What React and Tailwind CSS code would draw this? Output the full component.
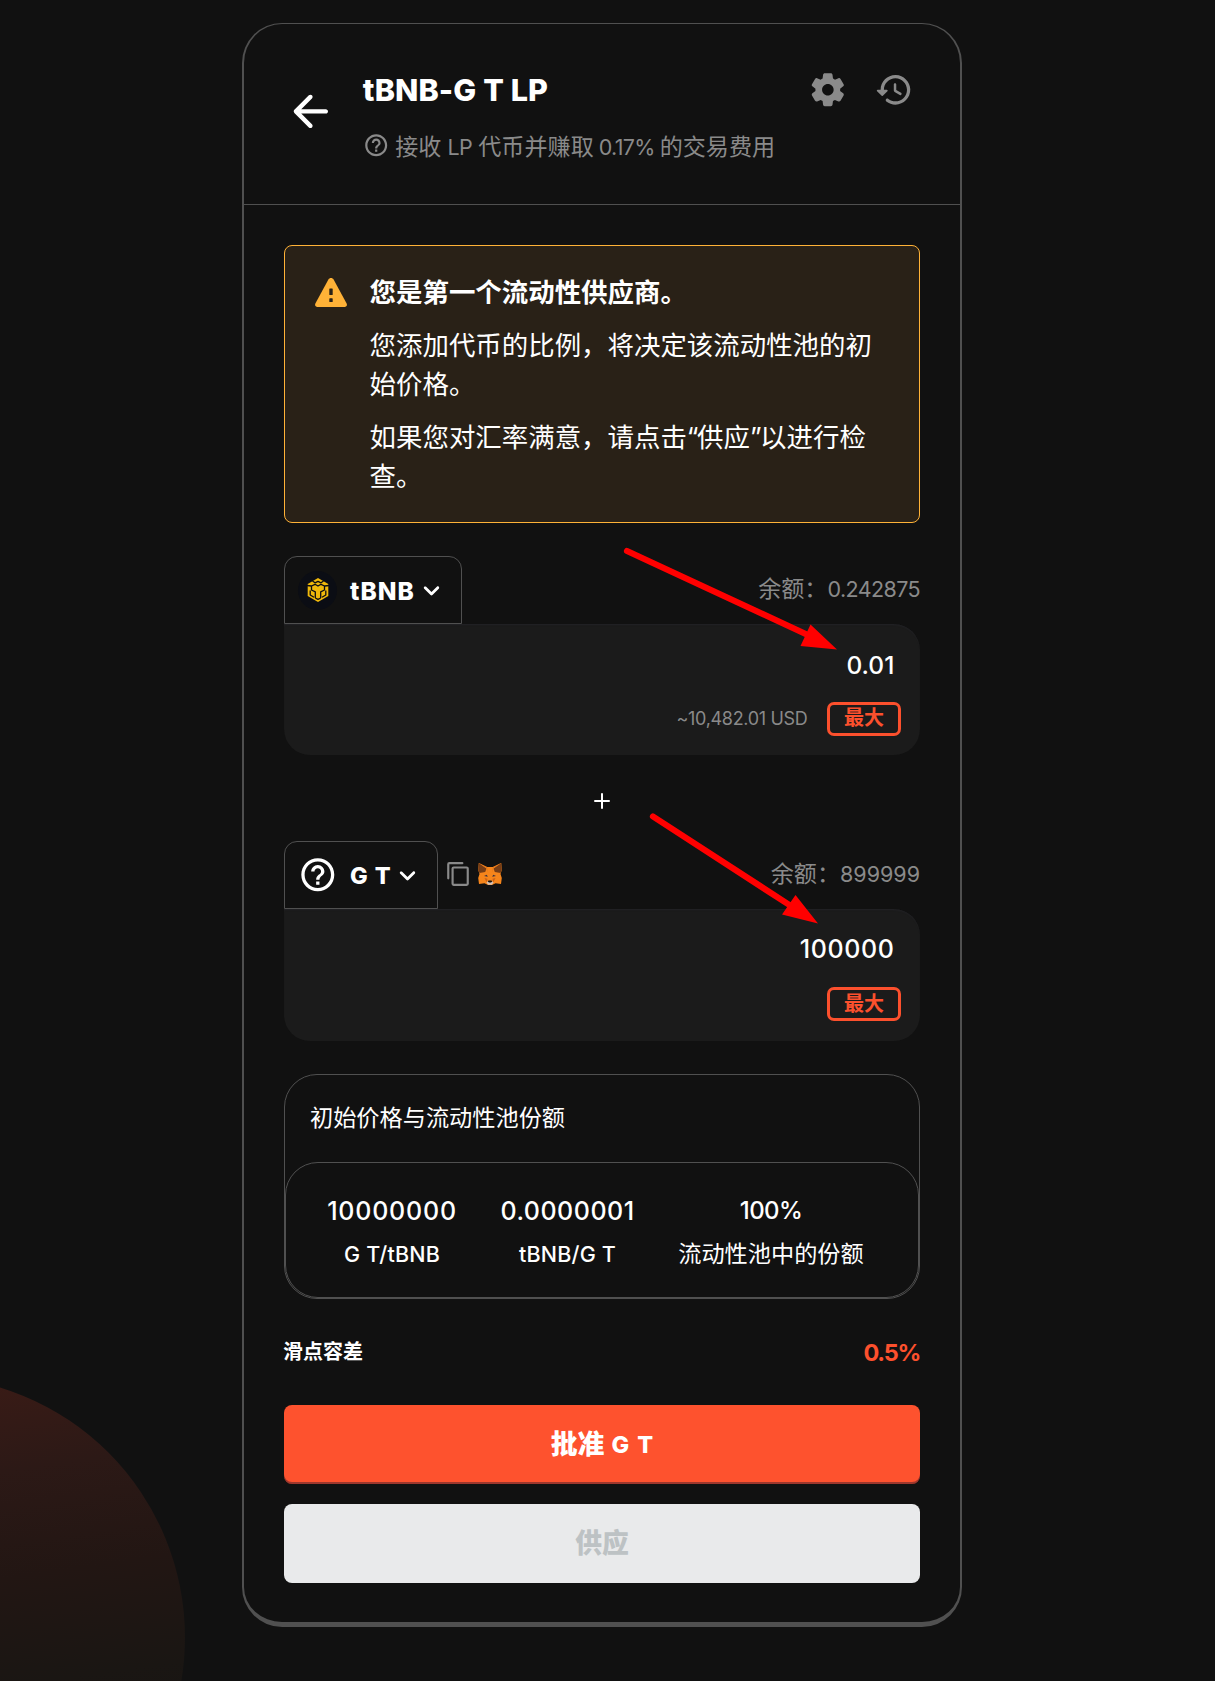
import React from "react";

const HELP_PATH =
  "M11 18h2v-2h-2v2zm1-16C6.48 2 2 6.48 2 12s4.48 10 10 10 10-4.48 10-10S17.52 2 12 2zm0 18c-4.41 0-8-3.59-8-8s3.59-8 8-8 8 3.59 8 8-3.59 8-8 8zm0-14c-2.21 0-4 1.79-4 4h2c0-1.1.9-2 2-2s2 .9 2 2c0 2-3 1.75-3 5h2c0-2.25 3-2.5 3-5 0-2.21-1.79-4-4-4z";
const BACK_PATH =
  "M19 11H7.83l4.88-4.88c.39-.39.39-1.03 0-1.42-.39-.39-1.02-.39-1.41 0l-6.59 6.59c-.39.39-.39 1.02 0 1.41l6.59 6.59c.39.39 1.02.39 1.41 0 .39-.39.39-1.02 0-1.41L7.83 13H19c.55 0 1-.45 1-1s-.45-1-1-1z";
const COG_PATH =
  "M19.5 12c0-.23-.01-.45-.03-.68l1.86-1.41c.4-.3.51-.86.26-1.3l-1.87-3.23c-.25-.44-.79-.62-1.25-.42l-2.15.91c-.37-.26-.76-.49-1.17-.68l-.29-2.31c-.06-.5-.49-.88-.99-.88h-3.73c-.51 0-.94.38-1 .88l-.29 2.31c-.41.19-.8.42-1.17.68l-2.15-.91c-.46-.2-1-.02-1.25.42L2.41 8.62c-.25.44-.14.99.26 1.3l1.86 1.41c-.02.22-.03.44-.03.67s.01.45.03.68l-1.86 1.41c-.4.3-.51.86-.26 1.3l1.87 3.23c.25.44.79.62 1.25.42l2.15-.91c.37.26.76.49 1.17.68l.29 2.31c.06.5.49.88.99.88h3.73c.5 0 .93-.38.99-.88l.29-2.31c.41-.19.8-.42 1.17-.68l2.15.91c.46.2 1 .02 1.25-.42l1.87-3.23c.25-.44.14-.99-.26-1.3l-1.86-1.41c.03-.23.04-.45.04-.68zm-7.46 3.500c-1.93 0-3.5-1.57-3.5-3.5s1.57-3.5 3.5-3.5 3.5 1.57 3.5 3.5-1.57 3.5-3.5 3.5z";
const HISTORY_PATH =
  "M13.26 3C8.17 2.86 4 6.95 4 12H2.21c-.45 0-.67.54-.35.85l2.79 2.8c.2.2.51.2.71 0l2.79-2.8c.31-.31.09-.85-.36-.85H6c0-3.9 3.18-7.05 7.1-7 3.72.05 6.85 3.18 6.9 6.9.05 3.91-3.1 7.1-7 7.1-1.61 0-3.1-.55-4.28-1.48-.4-.31-.96-.28-1.32.08-.42.42-.39 1.13.08 1.49C9 20.29 10.91 21 13 21c5.05 0 9.14-4.17 9-9.26-.13-4.69-4.05-8.61-8.74-8.74zm-.51 5c-.41 0-.75.34-.75.75v3.68c0 .35.19.68.49.86l3.12 1.85c.36.21.82.09 1.03-.26.21-.36.1-.82-.26-1.03l-2.88-1.71v-3.4c0-.4-.34-.74-.75-.74z";
const CHEVRON_PATH =
  "M8.12 9.29L12 13.17l3.88-3.88c.39-.39 1.02-.39 1.41 0 .39.39.39 1.02 0 1.41l-4.59 4.59c-.39.39-1.02.39-1.41 0L6.7 10.7c-.39-.39-.39-1.02 0-1.41.39-.38 1.03-.39 1.42 0z";

function Icon({ d, className }) {
  return (
    <svg viewBox="0 0 24 24" fill="currentColor" className={className}>
      <path d={d} />
    </svg>
  );
}

function WarningIcon() {
  return (
    <svg viewBox="0 0 32 29" className="mt-[32px] h-[29px] w-[32px] shrink-0">
      <path
        d="M13.4 1.6C14.6-.4 17.4-.4 18.6 1.6L31.500 25.200C32.500 27.200 31.600 29 29.500 29H2.500C.4 29-.5 27.200.5 25.200Z"
        fill="#ffb237"
      />
      <rect x="14.300" y="10.500" width="3.400" height="6.500" rx="0.600" fill="#292117" />
      <rect x="14.300" y="20.300" width="3.400" height="3.700" rx="0.600" fill="#292117" />
    </svg>
  );
}

function BnbIcon() {
  return (
    <span className="flex size-[39px] shrink-0 items-center justify-center rounded-full bg-[#0b0d14]">
      <svg viewBox="0 0 22 24" className="h-6 w-[22px]">
        <path d="M11 0 21.300 5.900V17.900L11 24 .7 17.900V5.900Z" fill="#f0b90b" />
        <g fill="none" stroke="#0b0d14" strokeWidth="1.300" strokeLinejoin="round">
          <path d="M5.500 3 8 4.800 11 3.300l3 1.500L16.500 3" />
          <path d="M0 7.500 4.500 8 8 6.300 11 8l3-1.700L17.500 8 22 7.500" />
          <path d="M4.500 8v4l3.800 1.900V20M17.500 8v4l-3.800 1.900V20" />
          <path d="M3.200 12.500v4.500l3.800 2.300M18.800 12.500v4.500L15 19.300M8.300 20 11 21.300 13.700 20" />
        </g>
      </svg>
    </span>
  );
}

function CopyIcon() {
  return (
    <svg viewBox="0 0 24 24" fill="none" stroke="#8a8a8a" strokeWidth="2" strokeLinejoin="round" strokeLinecap="round" className="size-[26px]">
      <path d="M3 16V3a1 1 0 0 1 1-1h12" />
      <rect x="7" y="6" width="14" height="16" rx="1" />
    </svg>
  );
}

function FoxIcon() {
  return (
    <svg viewBox="0 0 24 22" className="ml-[7px] h-[22px] w-6">
      <path d="M.8 0 9 4h6L23.200 0l.6 7-1.300 4 1.300 4-.8 6-5.500-.8L14 22h-4l-3.500-1.800L1 21 .2 15l1.300-4L.2 7Z" fill="#f6851b" />
      <path d="M.8 0 8.500 5.500 7.200 9 1.500 10 .2 7ZM23.200 0 15.500 5.500l1.300 3.500L22.500 10l1.300-3Z" fill="#763d16" />
      <path d="M.8 0 9 4l1.200 6-1.700-4.500ZM23.200 0 15 4l-1.200 6 1.700-4.500Z" fill="#e2761b" />
      <path d="m6 13 2.800-1.300 1 2ZM18 13l-2.800-1.300-1 2Z" fill="#3b3140" />
      <path d="m6.500 15 3 .8-.8 3.700ZM17.500 15l-3 .8.8 3.700Z" fill="#cd6116" />
      <path d="m8.500 19.300 1.500-1h4l1.500 1-1.500 2.500h-4Z" fill="#d7c1b3" />
      <path d="m9.800 18.600.7-1h3l.7 1-1.200.8h-2Z" fill="#161616" />
    </svg>
  );
}

function MaxButton() {
  return (
    <button className="flex h-[34px] w-[74px] items-center justify-center rounded-[7px] border-[3px] border-[#fc502d] pb-px text-[20px] leading-none font-bold text-[#fc502d]">
      最大
    </button>
  );
}

function CurrencyInput({ tab, extras, balance, balanceClass, value, valueClass, boxClass, usd }) {
  return (
    <div>
      <div className="flex h-[68px] items-center">
        {tab}
        {extras}
        <div className="mb-0.5 ml-auto flex items-center text-[#8a8a8a]">
          <span className="text-[23.1px]">余额：</span>
          <span className={balanceClass}>{balance}</span>
        </div>
      </div>
      <div className={boxClass}>
        <span className={valueClass}>{value}</span>
        <div className="mr-[19px] flex items-center">
          {usd && <span className="mr-[19.500px] text-[18px] tracking-[-0.320px] text-[#8a8a8a]">{usd}</span>}
          <MaxButton />
        </div>
      </div>
    </div>
  );
}

function PriceColumn({ value, label, className, valueClass, labelClass }) {
  return (
    <div className={className}>
      <span className={valueClass}>{value}</span>
      <span className={labelClass}>{label}</span>
    </div>
  );
}

export default function App() {
  return (
    <div className="relative h-[1681px] w-[1215px] overflow-hidden bg-[#111111] pt-[23px] pl-[242px] font-['Inter','Noto_Sans_CJK_SC',sans-serif] text-white">
      <div className="absolute top-[1376px] left-[-338px] size-[523px] rounded-full bg-[linear-gradient(172deg,#411c16_0%,#2c1916_24%,#221613_42%,#1a1613_60%,#111111_100%)]" />

      <main className="relative flex h-[1604px] w-[720px] flex-col rounded-[40px] border-2 border-t border-b-[5px] border-[#505050] bg-[#111111]">
        <header className="flex h-[181px] shrink-0 border-b border-[#505050] pl-10">
          <Icon d={BACK_PATH} className="mt-[61px] size-[52.800px] shrink-0" />
          <div className="ml-[26px] flex flex-1 flex-col">
            <div className="mt-[46px] flex h-10 items-center">
              <h1 className="text-[30.500px] font-extrabold tracking-[0.100px] whitespace-nowrap">tBNB-G T LP</h1>
              <div className="mr-[46px] ml-auto flex gap-[26.600px] text-[#8a8a8a]">
                <Icon d={COG_PATH} className="size-[39.600px]" />
                <Icon d={HISTORY_PATH} className="size-[39.600px]" />
              </div>
            </div>
            <div className="mt-[20px] flex h-[34px] items-center text-[#8a8a8a]">
              <Icon d={HELP_PATH} className="mb-[3px] size-[26.400px]" />
              <p className="ml-[6px] flex items-center whitespace-nowrap text-[23.1px]">
                接收<span className="mx-[6px] text-[21.500px] tracking-[-0.5px]">LP</span>代币并赚取
                <span className="mx-[5px] text-[21.500px] tracking-[-0.7px]">0.17%</span>的交易费用
              </p>
            </div>
          </div>
        </header>

        <div className="flex flex-col px-10 pt-10">
          <section className="flex h-[278px] rounded-lg border border-[#ffb237] bg-[#292117] pl-[30px]">
            <WarningIcon />
            <div className="mt-[27px] ml-[22.600px] flex w-[520px] flex-col gap-[13px] text-[26.450px] leading-[39.600px]">
              <p className="font-bold">您是第一个流动性供应商。</p>
              <p>您添加代币的比例，将决定该流动性池的初<br />始价格。</p>
              <p>
                如果您对汇率满意，请点击<span className="tracking-[-1.500px]">“</span>供应
                <span className="tracking-[-1.500px]">”</span>以进行检<br />查。
              </p>
            </div>
          </section>

          <div className="mt-[33px]">
            <CurrencyInput
              tab={
                <button className="flex h-[68px] w-[178px] items-center rounded-t-[13px] border border-[#505050] pl-[13px]">
                  <BnbIcon />
                  <span className="mt-0.5 ml-[13px] w-[64px] text-left text-[24.500px] font-extrabold tracking-[1px]">tBNB</span>
                  <Icon d={CHEVRON_PATH} className="ml-px size-[33px]" />
                </button>
              }
              balance="0.242875"
              balanceClass="text-[21.500px] tracking-[-0.6px]"
              boxClass="flex h-[131px] flex-col items-end rounded-[26px] rounded-tl-none bg-[#1b1b1b] shadow-[inset_0_2px_2px_-1px_rgba(74,74,104,0.15)]"
              value="0.01"
              valueClass="mt-[21px] mr-[25.700px] mb-[16.500px] h-10 text-[24.500px] leading-[40px] font-medium"
              usd="~10,482.01 USD"
            />
          </div>

          <div className="flex h-[86px] items-center justify-center">
            <svg viewBox="0 0 16 16" className="mt-[6px] size-4" stroke="white" strokeWidth="2" strokeLinecap="round">
              <path d="M8 1v14M1 8h14" />
            </svg>
          </div>

          <CurrencyInput
            tab={
              <button className="flex h-[68px] w-[154px] items-center rounded-t-[13px] border border-[#505050] pl-[13px]">
                <Icon d={HELP_PATH} className="size-[39.600px]" />
                <span className="mt-0.5 ml-[12.400px] w-[40px] text-left text-[23.500px] font-extrabold [word-spacing:2px] whitespace-nowrap">G T</span>
                <Icon d={CHEVRON_PATH} className="ml-px size-[33px]" />
              </button>
            }
            extras={
              <div className="mb-0.5 ml-[7px] flex items-center">
                <CopyIcon />
                <FoxIcon />
              </div>
            }
            balance="899999"
            balanceClass="text-[21.500px]"
            boxClass="flex h-[132px] flex-col items-end rounded-[26px] rounded-tl-none bg-[#1b1b1b] shadow-[inset_0_2px_2px_-1px_rgba(74,74,104,0.15)]"
            value="100000"
            valueClass="mt-[20px] mr-[25.500px] mb-[18px] h-10 text-[25px] leading-[40px] font-medium tracking-[0.600px]"
          />

          <section className="mt-[33px] h-[225px] rounded-[33px] border border-[#505050]">
            <h2 className="flex h-[87px] items-center pl-[25px] text-[23.200px]">初始价格与流动性池份额</h2>
            <div className="flex h-[136px] rounded-[33px] border border-[#505050] pt-[27px]">
              <PriceColumn
                value="10000000"
                label="G T/tBNB"
                className="ml-[41px] flex w-[130px] flex-col items-center"
                valueClass="h-[42px] text-[25px] leading-[42px] font-medium tracking-[0.800px]"
                labelClass="h-[44px] text-[21.500px] leading-[44px] font-medium tracking-[0.200px]"
              />
              <PriceColumn
                value="0.0000001"
                label="tBNB/G T"
                className="ml-[43.500px] flex w-[134px] flex-col items-center"
                valueClass="h-[42px] text-[25px] leading-[42px] font-medium tracking-[0.500px]"
                labelClass="h-[44px] text-[21.500px] leading-[44px] font-medium tracking-[0.200px]"
              />
              <PriceColumn
                value="100%"
                label="流动性池中的份额"
                className="ml-[43.500px] flex w-[186px] flex-col items-center"
                valueClass="h-[42px] text-[24px] leading-[42px] font-medium tracking-[-0.600px]"
                labelClass="h-[44px] text-[23.200px] leading-[44px] whitespace-nowrap"
              />
            </div>
          </section>

          <div className="mt-[33px] flex h-10 items-center justify-between">
            <span className="-ml-px text-[20px] font-bold">滑点容差</span>
            <span className="mt-px text-[23.500px] font-bold tracking-[-1.300px] text-[#fc502d]">0.5%</span>
          </div>

          <button className="mt-[33px] flex h-[79px] items-center justify-center rounded-lg bg-[#fe522e] text-[26.800px] font-extrabold shadow-[inset_0_-2px_0_rgba(14,14,44,0.4)]">
            批准<span className="mt-px ml-[7px] text-[23.500px] [word-spacing:3px]">G T</span>
          </button>
          <button className="mt-5 flex h-[79px] items-center justify-center rounded-lg bg-[#e9eaeb] text-[26.800px] font-extrabold text-[#bdc2c4]">
            供应
          </button>
        </div>
      </main>

      <svg viewBox="0 0 1215 1681" className="pointer-events-none absolute inset-0 h-[1681px] w-[1215px]" fill="#ff0000" stroke="#ff0000">
        <path d="M627 551 810 636M653 816.500 791 906" strokeWidth="6.200" strokeLinecap="round" fill="none" />
        <path d="M837 649.500 810.500 624.500 800.500 646ZM818 923.500 795.500 895 782 914.500Z" stroke="none" />
      </svg>
    </div>
  );
}
